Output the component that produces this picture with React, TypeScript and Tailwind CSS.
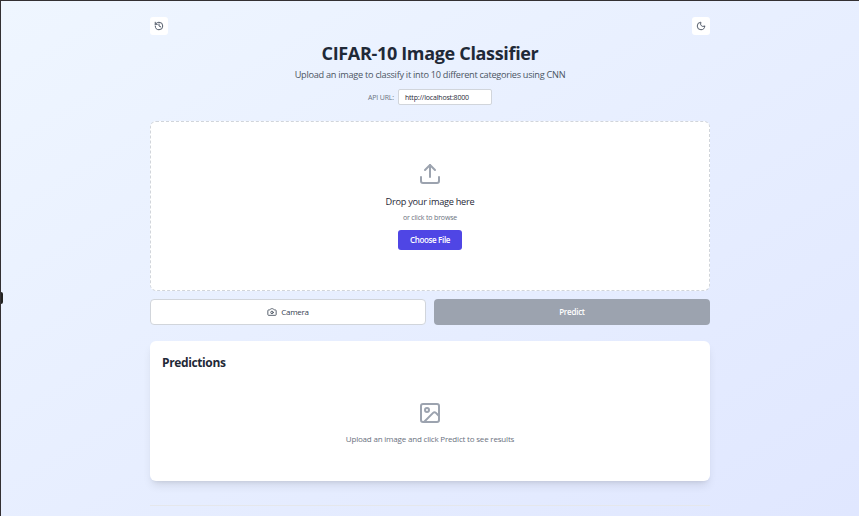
import React from "react";
import { Camera, History, Image, Moon, Upload } from "lucide-react";

export default function App() {
  return (
    <div className="relative h-[516px] w-[859px] overflow-hidden border-t border-l border-[#333033] bg-linear-to-br from-[#eff6ff] to-[#e0e7ff] font-['Open_Sans','Noto_Sans',sans-serif] text-[#1f2937]">
      <div className="absolute top-[291px] -left-px h-3 w-[3px] rounded-r-xs bg-[#222]" />
      <main className="mx-auto flex w-[560px] flex-col pt-4">
        <div className="flex h-[18px] justify-between">
          <button className="flex size-[18px] items-center justify-center rounded-[3px] bg-white text-[#4b5563]">
            <History size={10} strokeWidth={2.3} />
          </button>
          <button className="flex size-[18px] items-center justify-center rounded-[3px] bg-white text-[#4b5563]">
            <Moon size={10} strokeWidth={2.3} />
          </button>
        </div>
        <header className="flex flex-col items-center">
          <h1 className="mt-1.5 h-6 text-[18px] leading-[25px] font-bold tracking-[-0.33px] whitespace-nowrap">CIFAR-10 Image Classifier</h1>
          <p className="mt-0.5 h-4 text-[9.2px] leading-4 tracking-[-0.28px] whitespace-nowrap text-[#4b5563]">
            Upload an image to classify it into 10 different categories using CNN
          </p>
          <div className="mt-1.5 flex h-4 items-center gap-1">
            <label className="pt-px text-[7px] leading-4 tracking-[-0.18px] whitespace-nowrap text-[#6b7280]">API URL:</label>
            <div className="flex h-4 w-[94px] items-center rounded-xs border border-[#d1d5db] bg-white pt-px pl-1.5 text-[7px] leading-[14px] tracking-[-0.18px]">
              <span>http://localhost:8000</span>
            </div>
          </div>
        </header>
        <section className="mt-4 flex h-[170px] flex-col items-center rounded-md border border-dashed border-[#d1d5db] bg-white pt-10">
          <Upload size={24} strokeWidth={2} className="text-[#9ca3af]" />
          <p className="mt-2 h-4 text-[9.2px] leading-4 font-medium tracking-[-0.26px]">Drop your image here</p>
          <p className="mt-[3px] h-2.5 text-[7px] leading-2.5 tracking-[-0.17px] text-[#6b7280]">or click to browse</p>
          <button className="mt-[7px] flex h-5 w-16 items-center justify-center rounded-[3px] bg-[#4f46e5] text-[8px] leading-5 font-semibold tracking-[-0.33px] text-white">
            <span>Choose File</span>
          </button>
        </section>
        <div className="mt-2 grid h-[26px] grid-cols-2 gap-2 text-[8px] leading-3 tracking-[-0.25px]">
          <button className="flex items-center justify-center gap-1 rounded border border-[#d1d5db] bg-white font-medium text-[#374151]">
            <Camera size={10} strokeWidth={2.2} className="text-[#4b5563]" />
            <span>Camera</span>
          </button>
          <button className="flex items-center justify-center rounded bg-[#9ca3af] font-semibold text-white">
            <span>Predict</span>
          </button>
        </div>
        <section className="mt-4 flex h-[140px] flex-col rounded-md bg-white px-3 pt-3 shadow-[0_6px_10px_-2px_rgba(0,0,0,0.1),0_3px_4px_-3px_rgba(0,0,0,0.1)]">
          <h2 className="h-[18px] text-[12px] leading-[19px] font-bold tracking-[-0.38px]">Predictions</h2>
          <div className="mt-[30px] flex flex-col items-center">
            <Image size={24} strokeWidth={2} className="text-[#9ca3af]" />
            <p className="mt-2 h-3 text-[8px] leading-3 tracking-[-0.19px] text-[#6b7280]">
              Upload an image and click Predict to see results
            </p>
          </div>
        </section>
        <div className="mt-6 border-t border-[#e5e7eb]" />
      </main>
    </div>
  );
}
